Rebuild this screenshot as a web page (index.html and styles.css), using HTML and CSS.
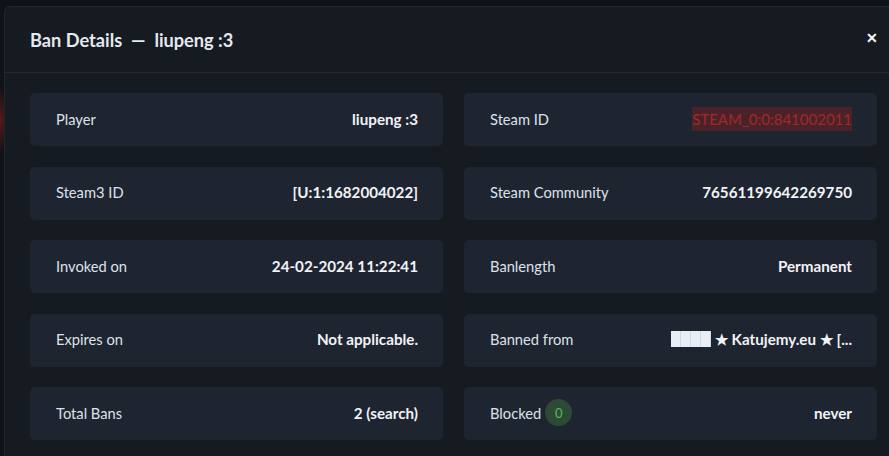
FILE: index.html
```html
<!DOCTYPE html>
<html>
<head>
<meta charset="UTF-8">
<title>Ban Details</title>
<link rel="stylesheet" href="styles.css">
</head>
<body>
<div class="modal">
  <div class="modal-header">
    <h2 class="modal-title">Ban Details &nbsp;—&nbsp; liupeng :3</h2>
    <span class="close">&#x2715;</span>
  </div>
  <div class="modal-body">
    <div class="details">
      <div class="item"><span class="label">Player</span><span class="value">liupeng :3</span></div>
      <div class="item"><span class="label">Steam ID</span><span class="value steamid">STEAM_0:0:841002011</span></div>
      <div class="item"><span class="label">Steam3 ID</span><span class="value">[U:1:1682004022]</span></div>
      <div class="item"><span class="label">Steam Community</span><span class="value">76561199642269750</span></div>
      <div class="item"><span class="label">Invoked on</span><span class="value">24-02-2024 11:22:41</span></div>
      <div class="item"><span class="label">Banlength</span><span class="value">Permanent</span></div>
      <div class="item"><span class="label">Expires on</span><span class="value">Not applicable.</span></div>
      <div class="item"><span class="label">Banned from</span><span class="value"><span class="blocks"><i></i><i></i><i></i><i></i></span> ★ Katujemy.eu ★ [...</span></div>
      <div class="item"><span class="label">Total Bans</span><span class="value">2 (search)</span></div>
      <div class="item"><span class="label">Blocked <span class="badge">0</span></span><span class="value">never</span></div>
    </div>
  </div>
</div>
</body>
</html>
```

FILE: styles.css
```css
* {
  box-sizing: border-box;
}
body {
  margin: 0;
  height: 456px;
  overflow: hidden;
  font-family: Lato, "Open Sans", sans-serif;
  background-color: #0f1318;
  background-image: radial-gradient(ellipse 14px 34px at 0px 120px, rgba(140, 30, 30, 0.55), transparent);
  padding: 6px 0 0 4px;
}
.modal {
  width: 910px;
  background: #161a21;
  border: 1px solid #20262e;
  border-radius: 6px 0 0 0;
  min-height: 470px;
}
.modal-header {
  display: flex;
  align-items: center;
  justify-content: space-between;
  height: 66px;
  padding: 0 0 0 25px;
  border-bottom: 1px solid #232931;
}
.modal-title {
  margin: 0;
  font-size: 18.2px;
  font-weight: 700;
  color: #e4e8ef;
}
.close {
  color: #ffffff;
  font-size: 14px;
  font-weight: 700;
  margin-right: 35px;
  margin-top: -4px;
}
.modal-body {
  padding: 20px 25px;
}
.details {
  display: grid;
  grid-template-columns: 413px 413px;
  column-gap: 21px;
  row-gap: 20.5px;
}
.item {
  height: 53px;
  background: #1f2530;
  border-radius: 5px;
  display: flex;
  align-items: center;
  justify-content: space-between;
  padding: 0 25px 2px 26px;
  font-size: 14.7px;
}
.label {
  color: #dde2ea;
  display: flex;
  align-items: center;
}
.value {
  color: #f1f3f7;
  font-weight: 700;
  font-size: 15.2px;
  display: flex;
  align-items: center;
}
.steamid {
  font-weight: 400;
  font-size: 15px;
  color: #a3282a;
  background: #4a2329;
  padding: 3px 0;
}
.blocks {
  display: inline-flex;
  height: 16px;
  margin-right: 4px;
}
.blocks i {
  display: block;
  width: 10px;
  height: 16px;
  background: #e9edf5;
  border-right: 1px solid #d3d8e2;
}
.badge {
  display: inline-flex;
  align-items: center;
  justify-content: center;
  width: 27px;
  height: 27px;
  margin-left: 4px;
  border-radius: 50%;
  background: #2c4a36;
  color: #5cb85c;
  font-size: 13px;
  font-weight: 400;
}
```
